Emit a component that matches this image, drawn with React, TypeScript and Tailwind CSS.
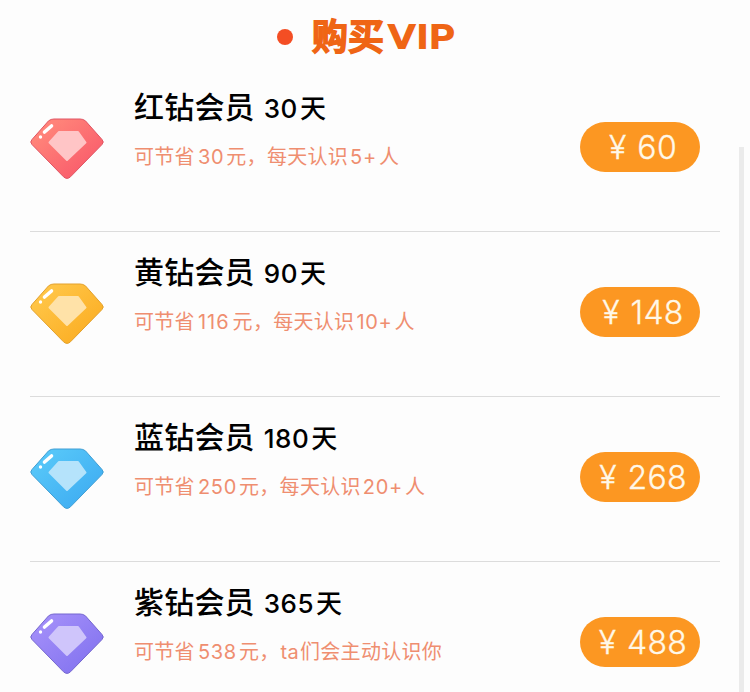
interface PlanProps {
  id: string
  name: string
  days: string
  saving: string
  benefit: string[]
  price: string
  light: string
  dark: string
  edge: string
  inner: string
}

const plans: PlanProps[] = [
  { id: 'red', name: '红钻会员', days: '30', saving: '30', benefit: ['元，每天认识', '5+', '人'], price: '60', light: '#ff8379', dark: '#f95b6b', edge: '#e05564', inner: '#ffc5c6' },
  { id: 'yellow', name: '黄钻会员', days: '90', saving: '116', benefit: ['元，每天认识', '10+', '人'], price: '148', light: '#ffc445', dark: '#fbae24', edge: '#e3a12c', inner: '#ffe2a8' },
  { id: 'blue', name: '蓝钻会员', days: '180', saving: '250', benefit: ['元，每天认识', '20+', '人'], price: '268', light: '#55c5f8', dark: '#3fadf2', edge: '#419fd4', inner: '#b5e3fb' },
  { id: 'purple', name: '紫钻会员', days: '365', saving: '538', benefit: ['元，', 'ta', '们会主动认识你'], price: '488', light: '#a08cf8', dark: '#8474f0', edge: '#7567cf', inner: '#cfc5fb' },
]

function Diamond({ plan }: { plan: PlanProps }) {
  return (
    <svg width="76" height="64" viewBox="0 0 76 64" className="-ml-px block shrink-0">
      <defs>
        <linearGradient id={plan.id} x1="0" y1="0" x2="1" y2="1">
          <stop offset="0.2" stopColor={plan.light} />
          <stop offset="0.85" stopColor={plan.dark} />
        </linearGradient>
      </defs>
      <path
        d="M25 2H51Q54 2 56.400 3.800L73 22.500Q75.500 25 73 27.500L41.500 59.800Q38 63 34.500 59.800L3 27.500Q.500 25 3 22.500L19.600 3.800Q22 2 25 2Z"
        fill={`url(#${plan.id})`}
        stroke={plan.edge}
        strokeWidth="1"
      />
      <path d="M30 15H49L56.500 25.500L38 43L20.500 25.500Z" fill={plan.inner} stroke={plan.inner} strokeWidth="2" strokeLinejoin="round" />
      <path d="M15.500 15L22.500 9" stroke="white" strokeWidth="3.600" strokeLinecap="round" />
      <circle cx="11.500" cy="20" r="1.700" fill="white" />
    </svg>
  )
}

function Plan({ plan }: { plan: PlanProps }) {
  return (
    <li className="flex h-[165px] border-b border-[#dcdcdc]">
      <div className="w-[104px] pt-[50px]">
        <Diamond plan={plan} />
      </div>

      <div className="flex-1 whitespace-nowrap">
        <h2 className="flex h-[42px] items-baseline pt-[18px] leading-[44px] font-medium text-black">
          <span className="text-[30px] tracking-[0.200px]">{plan.name}</span>
          <span className="ml-[9px] text-[26px] tracking-[0.500px]">{plan.days}</span>
          <span className="ml-[2px] text-[26px]">天</span>
        </h2>
        <p className="mt-[33px] flex items-baseline text-[20px] leading-[30px] tracking-[0.300px] text-[#ef8e70]">
          <span>可节省</span>
          <span className={plan.saving === '116' ? 'ml-[3px] mr-[3px] tracking-[1px]' : 'ml-[3px] mr-[2px] tracking-[0.700px]'}>{plan.saving}</span>
          <span>{plan.benefit[0]}</span>
          <span className={plan.benefit[1] === 'ta' ? 'mr-px ml-px' : 'mx-[2px] tracking-[0.700px]'}>{plan.benefit[1]}</span>
          <span>{plan.benefit[2]}</span>
        </p>
      </div>

      <button className="mt-[55px] mr-5 flex h-[50px] w-[120px] items-center justify-center rounded-full bg-[#fc9722] pt-px pl-[6px] text-[32px] font-light text-[#fff8e8] [-webkit-text-stroke:0.3px_#fff8e8]">
        <span>¥</span>
        <span className="ml-[11px] tracking-[0.300px]">{plan.price}</span>
      </button>
    </li>
  )
}

export default function App() {
  return (
    <div className="flex h-[692px] w-[750px] overflow-hidden bg-[#fdfdfd] font-['Inter','Noto_Sans_CJK_SC',sans-serif]">
      <main className="w-[690px] ml-[30px] shrink-0">
        <header className="flex h-[67px] items-center pl-[247px] pt-[6px]">
          <span className="h-4 w-4 rounded-full bg-[#f44e24]"></span>
          <h1 className="ml-[19px] flex items-center leading-[40px] font-medium text-[#ef6515] [paint-order:stroke] [stroke-linejoin:round] [-webkit-text-stroke:2px_#ef6515]">
            <span className="text-[36px]">购买</span>
            <span className="ml-[4px] origin-left scale-x-[1.25] text-[31px] tracking-[1.500px]">VIP</span>
          </h1>
        </header>

        <ul>
          {plans.map((plan) => (
            <Plan key={plan.id} plan={plan} />
          ))}
        </ul>
      </main>

      <div className="mt-[147px] ml-[19px] w-[5px] bg-[#ebebeb]"></div>
    </div>
  )
}
